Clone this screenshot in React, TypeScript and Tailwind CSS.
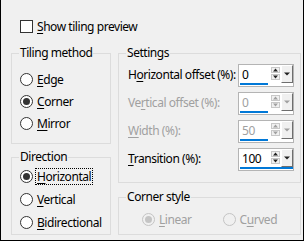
import React from 'react';

// -----------------------------------------------------------------------------
// Small Win32-ish controls
// -----------------------------------------------------------------------------

const K = ({ children }: { children: React.ReactNode }) => (
    <span className="underline underline-offset-[2px] decoration-1">{children}</span>
);

const Radio = ({ checked = false, disabled = false }: { checked?: boolean; disabled?: boolean }) => (
    <span
        className={`w-[13px] h-[13px] rounded-full border flex items-center justify-center shrink-0 ${
            disabled ? 'border-[#c4c4c4] bg-[#f0f0f0]' : 'border-[#333333] bg-white'
        }`}
    >
        {checked && (
            <span className={`w-[7px] h-[7px] rounded-full ${disabled ? 'bg-[#c4c4c4]' : 'bg-[#333333]'}`} />
        )}
    </span>
);

const RadioRow = ({
    label,
    checked,
    disabled,
    focused,
}: {
    label: React.ReactNode;
    checked?: boolean;
    disabled?: boolean;
    focused?: boolean;
}) => (
    <div className={`h-[20px] flex items-center gap-[3px] ${disabled ? 'text-[#a0a0a0]' : 'text-black'}`}>
        <Radio checked={checked} disabled={disabled} />
        <span className={`px-[1px] leading-[15px] ${focused ? 'outline outline-1 outline-dotted outline-black' : ''}`}>
            {label}
        </span>
    </div>
);

const Group = ({
    title,
    className,
    inner,
    children,
}: {
    title: string;
    className: string;
    inner: string;
    children: React.ReactNode;
}) => (
    <fieldset className={`border border-[#dcdcdc] ${className}`}>
        <legend className="ml-[7px] px-[1px] leading-[16px] text-black">{title}</legend>
        <div className={inner}>{children}</div>
    </fieldset>
);

const SpinBox = ({ value, disabled = false, wide = false }: { value: string; disabled?: boolean; wide?: boolean }) => (
    <div className="w-[56px] h-[23px] flex border border-[#b4b4b4] bg-white">
        <div className="flex-1 flex flex-col pt-[3px]">
            <span className={`pl-[3px] leading-[14px] ${disabled ? 'text-[#a0a0a0]' : 'text-black'}`}>{value}</span>
            <div className={`mt-auto mb-[1px] h-[2px] bg-[#0078d7] ${wide ? 'ml-[1px] mr-[-24px]' : 'mx-[1px]'}`} />
        </div>
        <div className="w-[12px] flex flex-col items-center justify-center gap-[1px] pb-[4px]">
            <svg width="9" height="6" viewBox="0 0 9 6">
                <rect x="0.5" y="0.5" width="8" height="5" fill="#f0f0f0" stroke="#c8c8c8" />
                <path d="M2 4.5 L4.5 1.5 L7 4.5 Z" fill={disabled ? '#a0a0a0' : '#202020'} />
            </svg>
            <svg width="9" height="6" viewBox="0 0 9 6">
                <rect x="0.5" y="0.5" width="8" height="5" fill="#f0f0f0" stroke="#c8c8c8" />
                <path d="M2 1.5 L4.5 4.5 L7 1.5 Z" fill={disabled ? '#a0a0a0' : '#202020'} />
            </svg>
        </div>
        <div className="w-[12px] h-[18px] bg-[#f0f0f0] border-t border-l border-white border-r border-b border-r-[#6e6e6e] border-b-[#6e6e6e] flex items-center justify-center">
            <svg width="6" height="4" viewBox="0 0 6 4">
                <path d="M0 0.5 L6 0.5 L3 3.5 Z" fill={disabled ? '#a0a0a0' : '#202020'} />
            </svg>
        </div>
    </div>
);

const SettingRow = ({ label, value, disabled, wide }: { label: React.ReactNode; value: string; disabled?: boolean; wide?: boolean }) => (
    <div className="h-[23px] flex items-center justify-between">
        <span className={`leading-[15px] pb-[3px] whitespace-nowrap ${disabled ? 'text-[#a0a0a0]' : 'text-black'}`}>{label}</span>
        <SpinBox value={value} disabled={disabled} wide={wide} />
    </div>
);

// -----------------------------------------------------------------------------
// Dialog
// -----------------------------------------------------------------------------

export default function App() {
    return (
        <div
            className="w-[304px] h-[241px] bg-[#f0f0f0] border-l border-r border-b border-black text-[12px] tracking-[-0.45px] text-black overflow-hidden"
            style={{ fontFamily: '"Noto Sans", "Open Sans", sans-serif' }}
        >
            {/* Preview toggle */}
            <div className="pt-[20px] pl-[19px] h-[45px] flex items-start gap-[4px]">
                <span className="w-[13px] h-[13px] border border-[#333333] bg-white shrink-0" />
                <span className="leading-[14px]">
                    <K>S</K>how tiling preview
                </span>
            </div>

            <div className="flex gap-[7px] pl-[10px] pr-[2px]">
                {/* Left column */}
                <div className="w-[100px] flex flex-col gap-[5px]">
                    <Group title="Tiling method" className="h-[99px]" inner="pl-[8px] pt-[8px] flex flex-col gap-[2px]">
                        <RadioRow label={<><K>E</K>dge</>} />
                        <RadioRow label={<><K>C</K>orner</>} checked />
                        <RadioRow label={<><K>M</K>irror</>} />
                    </Group>
                    <Group title="Direction" className="h-[86px]" inner="pl-[8px] pt-[1px] flex flex-col gap-[3px]">
                        <RadioRow label={<><K>H</K>orizontal</>} checked focused />
                        <RadioRow label={<><K>V</K>ertical</>} />
                        <RadioRow label={<><K>B</K>idirectional</>} />
                    </Group>
                </div>

                {/* Right column */}
                <div className="w-[183px] flex flex-col gap-[6px]">
                    <Group title="Settings" className="h-[138px]" inner="pl-[9px] pr-[6px] pt-[3px] flex flex-col gap-[5px]">
                        <SettingRow label={<>H<K>o</K>rizontal offset (%):</>} value="0" />
                        <SettingRow label={<>Ve<K>r</K>tical offset (%):</>} value="0" disabled />
                        <SettingRow label={<><K>W</K>idth (%):</>} value="50" disabled />
                        <SettingRow label={<><K>T</K>ransition (%):</>} value="100" wide />
                    </Group>
                    <Group title="Corner style" className="h-[46px]" inner="pl-[23px] pt-[4px] flex gap-[30px]">
                        <RadioRow label={<><K>L</K>inear</>} checked disabled />
                        <RadioRow label={<>C<K>u</K>rved</>} disabled />
                    </Group>
                </div>
            </div>
        </div>
    );
}
